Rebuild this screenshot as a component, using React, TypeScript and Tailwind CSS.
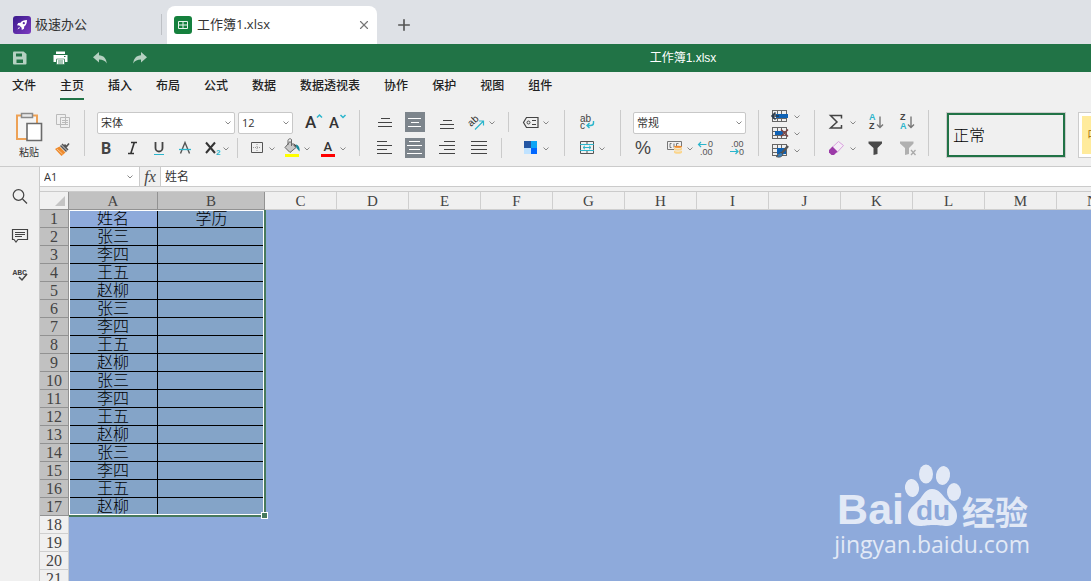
import React from "react";
import { X, Plus } from "lucide-react";

type Kids = { children?: React.ReactNode };

function Glyph({ children }: Kids) {
  return (
    <svg viewBox="0 0 20 20" className="h-5 w-5 shrink-0" fill="none" aria-hidden="true">
      {children}
    </svg>
  );
}

function Tool({ label, on, className = "", children }: Kids & { label: string; on?: boolean; className?: string }) {
  return (
    <button
      type="button"
      aria-label={label}
      aria-pressed={on}
      className={`flex h-5 w-5 shrink-0 items-center justify-center ${on ? "bg-[#7d858c]" : ""} ${className}`}
    >
      <Glyph>{children}</Glyph>
    </button>
  );
}

function Chevron() {
  return (
    <svg viewBox="0 0 6 4" className="h-1 w-1.5" fill="none" aria-hidden="true">
      <path d="M.5.5 3 3 5.500.5" stroke="#888" strokeWidth="1" />
    </svg>
  );
}

function More({ label, className = "" }: { label: string; className?: string }) {
  return (
    <button type="button" aria-label={label} className={`flex h-5 w-2.5 shrink-0 items-center justify-center pt-0.5 ${className}`}>
      <Chevron />
    </button>
  );
}

function Sep({ className }: { className: string }) {
  return <div className={`w-px shrink-0 bg-[#cbcbcb] ${className}`} />;
}

function Picker({ label, value, options, className }: { label: string; value: string; options: string[]; className: string }) {
  return (
    <div className={`relative h-[22px] shrink-0 ${className}`}>
      <select
        aria-label={label}
        defaultValue={value}
        className="block h-full w-full appearance-none rounded-xs border border-[#c8c8c8] bg-white pl-[3px] text-[11px] leading-5 text-[#333]"
      >
        {options.map((o) => (
          <option key={o}>{o}</option>
        ))}
      </select>
      <span className="pointer-events-none absolute inset-y-0 right-1 flex items-center">
        <Chevron />
      </span>
    </div>
  );
}

function Lines({ rows, color = "#444" }: { rows: [number, number, number][]; color?: string }) {
  return (
    <g fill={color} shapeRendering="crispEdges">
      {rows.map(([x, y, w]) => (
        <rect key={y} x={x} y={y} width={w} height="1" />
      ))}
    </g>
  );
}

function GridArt() {
  return <path d="M2.5 4.5h14v11h-14zM2.5 8.5h14M2.5 12.5h14M7.5 4.5v11M11.5 4.5v11" stroke="#666" shapeRendering="crispEdges" />;
}

function TabBar() {
  return (
    <header className="flex h-11 shrink-0 items-end bg-[#dee1e6] text-[13px] text-[#333]">
      <a href="#home" className="flex h-[38px] w-[161px] items-center gap-1 pl-[13px]">
        <svg viewBox="0 0 18 18" className="h-[18px] w-[18px]" aria-hidden="true">
          <defs>
            <linearGradient id="brand" x1="0" y1="0" x2="1" y2="1">
              <stop offset="0" stopColor="#3a1a8c" />
              <stop offset="1" stopColor="#7d3bc0" />
            </linearGradient>
          </defs>
          <rect width="18" height="18" rx="3" fill="url(#brand)" />
          <path d="M14 4c-3.2 0-5.3 1-6.5 2.8L5.200 7 4 9.200l2.300.2 2.300 2.300.2 2.300L11 12.800l.2-2.300C13 9.300 14 7.200 14 4z" fill="#fff" />
          <path d="M6 11 4.400 13.600 7 12z" fill="#fff" />
          <circle cx="10.8" cy="7.2" r="1.1" fill="#5a2ba5" />
        </svg>
        <span>极速办公</span>
      </a>
      <div className="mb-[9px] h-[21px] w-px bg-[#bdc0c5]" />
      <div className="ml-[5px] flex h-[38px] w-[210px] items-center rounded-t-lg bg-white pr-1.5 pl-[7px]">
        <svg viewBox="0 0 18 18" className="h-[18px] w-[18px]" fill="none" aria-hidden="true">
          <rect width="18" height="18" rx="3" fill="#15803d" />
          <path d="M4.5 5.5h9v7h-9zM4.5 9h9M9 5.5v7" stroke="#e8f5ec" />
        </svg>
        <span className="ml-[5px] flex-1">工作簿1.xlsx</span>
        <button type="button" aria-label="关闭标签页" className="flex items-center">
          <X size={14} strokeWidth={2} color="#777" />
        </button>
      </div>
      <button type="button" aria-label="新建标签页" className="ml-[18px] flex h-[38px] items-center">
        <Plus size={18} strokeWidth={2.2} color="#555" />
      </button>
    </header>
  );
}

function TitleBar() {
  return (
    <div className="flex h-7 shrink-0 items-center bg-[#217346]">
      <div className="flex w-[275px] shrink-0 gap-5 pl-2.5">
        <Tool label="保存">
          <path d="M3 4.5A1 1 0 0 1 4 3.5h9.500L16.500 6v9.500a1 1 0 0 1-1 1H4a1 1 0 0 1-1-1z" fill="#b6d1c2" />
          <path d="M6 5.5h6v3H6zM6.500 11.500h6.500v3.500H6.500z" fill="#217346" />
        </Tool>
        <Tool label="打印">
          <path d="M6 3.5h9V6H6zM3.500 7h14v7H15v-2.500H6V14H3.500z" fill="#fff" />
          <path d="M6.5 11h8v5.500h-8z" fill="#fff" stroke="#217346" strokeWidth=".6" />
          <path d="M8 13h5M8 15h5" stroke="#217346" strokeWidth=".8" />
          <path d="M14 8.5h1.500" stroke="#217346" />
        </Tool>
        <Tool label="撤消">
          <path d="M9 4v3.200c4.500.3 7.300 3 7.800 8.300-1.800-3-4.200-4-7.800-4V14.500L3 9.200z" fill="#b6d1c2" />
        </Tool>
        <Tool label="恢复">
          <path d="M11 4v3.200c-4.500.3-7.300 3-7.800 8.300 1.800-3 4.200-4 7.800-4V14.500l6-5.300z" fill="#b6d1c2" />
        </Tool>
      </div>
      <h1 className="flex-1 text-center font-['Liberation_Sans','Noto_Sans_CJK_SC',sans-serif] text-xs text-white">工作簿1.xlsx</h1>
    </div>
  );
}

const MENUS = ["文件", "主页", "插入", "布局", "公式", "数据", "数据透视表", "协作", "保护", "视图", "组件"];

function MenuBar() {
  return (
    <nav className="flex h-8 shrink-0 items-start gap-6 px-3 text-xs font-medium text-[#222]">
      {MENUS.map((m) => (
        <a key={m} href="#menu" className={`flex h-7 shrink-0 items-center border-b-2 pt-0.5 ${m === "主页" ? "border-[#217346]" : "border-transparent"}`}>
          {m}
        </a>
      ))}
    </nav>
  );
}

function Ribbon() {
  return (
    <div className="flex h-[63px] shrink-0 items-start overflow-hidden border-b border-[#cbcbcb]">
      <button type="button" className="mt-2 ml-[15px] flex w-7 shrink-0 flex-col items-center">
        <svg viewBox="0 0 28 31" className="h-[31px] w-7" fill="none" aria-hidden="true">
          <path d="M2 3.5h20V27H2z" fill="#f5f5f5" stroke="#eda257" strokeWidth="2" />
          <path d="M6.5 1.5h11v4h-11z" fill="#e8e8e8" stroke="#8a8a8a" strokeWidth="1.5" />
          <path d="M12 11.5h14.500v17H12z" fill="#fff" stroke="#6b6b6b" strokeWidth="1.6" />
        </svg>
        <span className="text-[10px] leading-[18px] text-[#333]">粘贴</span>
      </button>
      <div className="ml-2.5 flex flex-col gap-2 pt-[7px]">
        <Tool label="复制">
          <path d="M3.5 3.5h9v10h-9zM7.500 6.500h9v10h-9z" fill="#f0f0f0" stroke="#bbb" />
          <path d="M9 9.5h6M9 11.5h6M9 13.5h6" stroke="#bbb" />
        </Tool>
        <Tool label="格式刷">
          <path d="M11.5 5.5 13.500 7.500 16 4.500M9 5l6 6M7.500 6.500l6 6" stroke="#555" strokeWidth="1.6" />
          <path d="m6.5 7.5 6 6L8.500 17 2 10z" fill="#ee8a2c" />
          <path d="m4 10 5.500 5" stroke="#f6c593" />
        </Tool>
      </div>
      <Sep className="mt-1.5 ml-[11px] h-[46px]" />

      <div className="ml-3 flex shrink-0 flex-col gap-1.5 pt-2">
        <div className="flex h-5 items-start">
          <Picker label="字体" value="宋体" options={["宋体", "黑体", "楷体"]} className="w-[138px]" />
          <Picker label="字号" value="12" options={["10", "11", "12", "14"]} className="ml-[3px] w-[55px]" />
          <Tool label="增大字号" className="ml-[11px]">
            <text x="1" y="16" fontSize="17" fontWeight="500" fill="#333" fontFamily="Roboto">A</text>
            <path d="M13 5.500 15.500 3 18 5.500" stroke="#2bb5cc" strokeWidth="1.5" />
          </Tool>
          <Tool label="减小字号" className="ml-1">
            <text x="1" y="16" fontSize="15" fontWeight="500" fill="#333" fontFamily="Roboto">A</text>
            <path d="M12.5 3 15 5.500 17.500 3" stroke="#2bb5cc" strokeWidth="1.5" />
          </Tool>
        </div>
        <div className="flex h-5 items-center">
          <Tool label="加粗">
            <text x="4" y="16" fontSize="16" fontWeight="700" fill="#444" fontFamily="Roboto">B</text>
          </Tool>
          <Tool label="倾斜" className="ml-1.5">
            <path d="M8 4.5h6M5 15.5h6M11.300 4.500l-3.500 11" stroke="#333" strokeWidth="1.6" />
          </Tool>
          <Tool label="下划线" className="ml-1.5">
            <path d="M6.5 4v6a3.500 3.500 0 0 0 7 0V4" stroke="#444" strokeWidth="1.8" />
            <path d="M5 16.5h10" stroke="#2bb5cc" />
          </Tool>
          <Tool label="删除线" className="ml-1.5">
            <path d="m5.500 15.500 4.500-11 4.500 11" stroke="#555" strokeWidth="1.4" />
            <path d="M4 11.5h12" stroke="#2bb5cc" strokeWidth="1.3" />
          </Tool>
          <Tool label="下标" className="ml-1.5">
            <path d="m5 4.500 9 10.500M14 4.500 5 15" stroke="#333" strokeWidth="2" />
            <text x="15" y="17" fontSize="8" fontWeight="700" fill="#2bb5cc" fontFamily="Liberation Sans">2</text>
          </Tool>
          <More label="下标选项" />
          <Sep className="ml-1.5 h-5" />
          <Tool label="边框" className="ml-[9px]">
            <path d="M4.5 4.5h11v10h-11z" stroke="#555" />
            <path d="M6 9.5h8M10 6v7.500" stroke="#999" strokeDasharray="1 1" />
          </Tool>
          <More label="边框选项" />
          <Tool label="填充颜色" className="ml-[5px]">
            <path d="m8 3.500 6 6-6 5-5-5z" fill="#c9c9c9" stroke="#666" />
            <path d="M6 7V2.500A2 2 0 0 1 9.500 1.500V8" stroke="#666" />
            <path d="m11 5 3.500 2.500L15 9l-2-.5z" fill="#444" />
            <path d="M14 6.500c2.500.5 4 3 3.500 7l-3-3.500z" fill="#168a9c" />
            <path d="M3 16h14v3H3z" fill="#ff0" />
          </Tool>
          <More label="填充颜色选项" />
          <Tool label="字体颜色" className="ml-1.5">
            <text x="5.5" y="13" fontSize="13" fontWeight="500" fill="#333" fontFamily="Roboto">A</text>
            <path d="M3 16h14v3H3z" fill="red" />
          </Tool>
          <More label="字体颜色选项" />
        </div>
      </div>
      <Sep className="mt-1.5 ml-[11px] h-[46px]" />

      <div className="ml-[15px] flex shrink-0 flex-col gap-1.5 pt-2">
        <div className="flex h-5 items-center">
          <Tool label="顶端对齐"><Lines rows={[[6, 6, 9], [3, 10, 14], [3, 14, 14]]} /></Tool>
          <Tool label="垂直居中" on className="ml-2.5"><Lines color="#fff" rows={[[3, 6, 13], [6, 10, 8], [3, 14, 13]]} /></Tool>
          <Tool label="底端对齐" className="ml-3"><Lines rows={[[6, 8, 9], [3, 12, 14], [3, 16, 14]]} /></Tool>
          <Tool label="方向" className="ml-2.5">
            <text x="4" y="15" fontSize="10" fill="#333" fontFamily="Liberation Sans" transform="rotate(-42 4 15)">ab</text>
            <path d="m8 17.500 8.500-8.500M12 9h4.500v4.500" stroke="#2bb5cc" strokeWidth="1.2" />
          </Tool>
          <More label="方向选项" />
          <Sep className="ml-[11px] h-5" />
          <Tool label="命名区域" className="ml-3">
            <path d="M5.5 5.5H17v10H5.500L2.500 10.500z" stroke="#444" strokeWidth="1.2" />
            <circle cx="7.5" cy="10.5" r="1.5" stroke="#444" />
            <path d="M11 8.5h4M11 12.5h4" stroke="#444" />
          </Tool>
          <More label="命名区域选项" />
        </div>
        <div className="flex h-5 items-center">
          <Tool label="左对齐"><Lines rows={[[2, 3, 10], [2, 7, 15], [2, 11, 10], [2, 15, 15]]} /></Tool>
          <Tool label="居中" on className="ml-2.5"><Lines color="#fff" rows={[[4, 3, 11], [2, 7, 15], [4, 11, 11], [2, 15, 15]]} /></Tool>
          <Tool label="右对齐" className="ml-3"><Lines rows={[[7, 3, 11], [2, 7, 16], [7, 11, 11], [2, 15, 16]]} /></Tool>
          <Tool label="两端对齐" className="ml-3"><Lines rows={[[2, 3, 16], [2, 7, 16], [2, 11, 16], [2, 15, 16]]} /></Tool>
          <Sep className="ml-3 h-5" />
          <Tool label="条件格式" className="ml-[19px]">
            <path d="M3 3h7v7H3z" fill="#2456a3" />
            <path d="M10 3h6v7h-6z" fill="#0ba5f5" />
            <path d="M3 10h7v6H3z" fill="#bfe2ff" />
            <path d="M10 10h6v6h-6z" fill="#0067ff" />
          </Tool>
          <More label="条件格式选项" />
        </div>
      </div>
      <Sep className="mt-1.5 ml-[13px] h-[46px]" />

      <div className="ml-3 flex shrink-0 flex-col gap-1.5 pt-2">
        <Tool label="自动换行">
          <text x="3" y="10" fontSize="10" fill="#444" fontFamily="Liberation Sans">
            <tspan x="3" y="10">ab</tspan>
            <tspan x="3" y="17">c</tspan>
          </text>
          <path d="M16.5 9v2c0 2-1.500 2.500-3 2.500H10M12.500 11 10 13.500l2.500 2.500" stroke="#2bb5cc" strokeWidth="1.4" />
        </Tool>
        <div className="flex">
          <Tool label="合并单元格">
            <path d="M3.5 3.5h13v12h-13zM10 3.500v3M10 12.500v3" stroke="#555" />
            <path d="M3 6.5h14M3 12.5h14M6 9.500h8M8 7.800 6 9.500l2 1.700M12 7.800l2 1.700-2 1.700" stroke="#2bb5cc" />
          </Tool>
          <More label="合并单元格选项" />
        </div>
      </div>
      <Sep className="mt-1.5 ml-[13px] h-[46px]" />

      <div className="ml-3 flex shrink-0 flex-col gap-1.5 pt-2">
        <div className="flex h-5 items-start">
          <Picker label="数字格式" value="常规" options={["常规", "数值", "货币"]} className="w-[113px]" />
        </div>
        <div className="flex h-5 items-center">
          <Tool label="百分比">
            <text x="2" y="16" fontSize="18" fill="#444" fontFamily="Liberation Sans">%</text>
          </Tool>
          <Tool label="货币样式" className="ml-3">
            <path d="M2.5 3.5h14v8h-14z" stroke="#777" />
            <path d="M6.5 5.5H5v4h1.500M9 5.500v4M11.500 9.500v-4h2" stroke="#777" />
            <path d="M9 9c0-1.500 8-1.500 8 0v5.500c0 1.800-8 1.800-8 0z" fill="#fbd58b" />
            <path d="M9 9.200c1 1.500 7 1.500 8 0M9 12c1 1.500 7 1.500 8 0" stroke="#f0f0f0" />
            <ellipse cx="13" cy="8.8" rx="4" ry="1" fill="#ee8a2c" />
          </Tool>
          <More label="货币样式选项" />
          <Tool label="减少小数位数" className="ml-px">
            <text fontSize="9" fill="#555" fontFamily="Liberation Sans">
              <tspan x="12" y="9">0</tspan>
              <tspan x="4" y="17">.00</tspan>
            </text>
            <path d="M10.5 6.5h-8M5 4 2.500 6.500 5 9" stroke="#2bb5cc" strokeWidth="1.2" />
          </Tool>
          <Tool label="增加小数位数" className="ml-[11px]">
            <text fontSize="9" fill="#555" fontFamily="Liberation Sans">
              <tspan x="4" y="9">.00</tspan>
              <tspan x="12" y="17">0</tspan>
            </text>
            <path d="M3 13.5h8M8.500 11l2.500 2.500L8.500 16" stroke="#2bb5cc" strokeWidth="1.2" />
          </Tool>
        </div>
      </div>
      <Sep className="mt-1.5 ml-[11px] h-[46px]" />

      <div className="ml-[11px] flex shrink-0 flex-col pt-[3px]">
        <div className="flex h-[17px] items-center">
          <Tool label="插入单元格">
            <GridArt />
            <path d="M6 8h12v4H6z" fill="#0f62b5" />
            <path d="M9 10H2.500M5.500 6.500 2 10l3.500 3.500" stroke="#2a3b4c" strokeWidth="1.6" />
          </Tool>
          <More label="插入单元格选项" className="ml-0.5" />
        </div>
        <div className="flex h-[17px] items-center">
          <Tool label="删除单元格">
            <GridArt />
            <path d="M5 8h8v4H5z" fill="#0f62b5" />
            <path d="m11 6.500 7 7M18 6.500l-7 7" stroke="#7a4444" strokeWidth="1.6" />
          </Tool>
          <More label="删除单元格选项" className="ml-0.5" />
        </div>
        <div className="flex h-[17px] items-center">
          <Tool label="清除单元格">
            <GridArt />
            <path d="M7 8h9v6H7z" fill="#0f62b5" />
            <path d="m18 6-6.500 7.500" stroke="#555" strokeWidth="2.5" />
            <path d="M11 12.500c-3 0-2 3.500-5 4 3 1.500 6.500.5 7-2.500z" fill="#3c7fb8" stroke="#444" strokeWidth=".7" />
          </Tool>
          <More label="清除单元格选项" className="ml-0.5" />
        </div>
      </div>
      <Sep className="mt-1.5 ml-3 h-[46px]" />

      <div className="ml-[11px] flex shrink-0 flex-col gap-1.5 pt-2">
        <div className="flex h-5 items-center">
          <Tool label="求和">
            <path d="M15.500 6.500v-3h-11l6.500 6.500-6.500 6h11v-3" stroke="#444" strokeWidth="1.5" />
          </Tool>
          <More label="求和选项" className="ml-0.5" />
          <Tool label="升序" className="ml-2">
            <text fontWeight="700" fontFamily="Liberation Sans" fontSize="9">
              <tspan x="3" y="8" fill="#2bb5cc">A</tspan>
              <tspan x="3" y="17" fill="#444">Z</tspan>
            </text>
            <path d="M14 4.500v11M11 12.500l3 3 3-3" stroke="#777" strokeWidth="1.4" />
          </Tool>
          <Tool label="降序" className="ml-[11px]">
            <text fontWeight="700" fontFamily="Liberation Sans" fontSize="9">
              <tspan x="3" y="8" fill="#444">Z</tspan>
              <tspan x="3" y="17" fill="#2bb5cc">A</tspan>
            </text>
            <path d="M14 4.500v11M11 12.500l3 3 3-3" stroke="#777" strokeWidth="1.4" />
          </Tool>
        </div>
        <div className="flex h-5 items-center">
          <Tool label="清除">
            <path d="m12.500 3.500 5 4-7 7.500-5-5z" fill="#f5edf6" stroke="#d9a0de" />
            <path d="M6.500 8.500 11.500 13.500 8 17H5.500L3 14.500V12z" fill="#9c3aa8" />
          </Tool>
          <More label="清除选项" className="ml-0.5" />
          <Tool label="筛选" className="ml-2">
            <path d="M2.500 3.500H16v2L11.500 10v6l-4 1V10l-5-4.500z" fill="#4a4a4a" />
          </Tool>
          <Tool label="清除筛选" className="ml-[11px]">
            <path d="M3 3.500h13.500v2L12 10v6l-4 1V10L3 5.500z" fill="#b0b0b0" />
            <path d="m14 12 4.500 5M18.500 12 14 17" stroke="#aaa" strokeWidth="1.3" />
          </Tool>
        </div>
      </div>
      <Sep className="mt-1.5 ml-[11px] h-[46px]" />

      <div className="mt-2 ml-[17px] flex shrink-0 gap-3 font-['Noto_Sans_CJK_SC',sans-serif] text-base leading-5 font-light">
        <button type="button" className="h-[46px] w-[120px] border border-[#ccc]">
          <span className="flex h-full items-center border-2 border-[#217346] pb-0.5 pl-1 text-black">正常</span>
        </button>
        <button type="button" className="h-[46px] w-[120px] border border-[#ccc] bg-white p-[3px]">
          <span className="flex h-full items-center bg-[#ffeb9c] pb-0.5 pl-[5px] text-[#9c6500]">中性</span>
        </button>
      </div>
    </div>
  );
}

function SideBar() {
  return (
    <aside className="flex w-10 shrink-0 flex-col border-r border-[#cbcbcb] pt-2.5">
      <button type="button" aria-label="搜索" className="flex h-[39px] items-center justify-center">
        <Glyph>
          <circle cx="8.5" cy="8" r="5.300" stroke="#444" strokeWidth="1.2" />
          <path d="m12.500 12 4.500 4.500" stroke="#444" strokeWidth="1.3" />
        </Glyph>
      </button>
      <button type="button" aria-label="批注" className="flex h-[39px] items-center justify-center">
        <Glyph>
          <path d="M2.500 3.500h15v10H8L6 16l-2-2.500H2.500z" stroke="#444" strokeWidth="1.2" />
          <path d="M5 6.500h10M5 8.500h10M5 10.500h7" stroke="#444" />
        </Glyph>
      </button>
      <button type="button" aria-label="拼写检查" className="flex h-[39px] items-center justify-center">
        <Glyph>
          <text x="2.5" y="10" fontSize="8" fontWeight="700" fill="#444" fontFamily="Liberation Mono">ABC</text>
          <path d="m9 12 3 3 5-6" stroke="#444" strokeWidth="1.5" />
        </Glyph>
      </button>
    </aside>
  );
}

function FormulaBar() {
  return (
    <div className="flex h-5 shrink-0 items-stretch border-b border-[#cbcbcb] bg-white text-[#333]">
      <div className="relative flex w-[100px] shrink-0 border-r border-[#cbcbcb]">
        <input aria-label="名称框" defaultValue="A1" className="w-full bg-transparent pt-px pl-1 text-[11px]" />
        <span className="pointer-events-none absolute inset-y-0 right-1.5 flex items-center">
          <Chevron />
        </span>
      </div>
      <button
        type="button"
        aria-label="插入函数"
        className="flex w-[21px] shrink-0 items-center justify-center border-r border-[#cbcbcb] bg-[#f0f0f0] font-['Liberation_Serif',serif] text-base leading-none text-[#444] italic"
      >
        fx
      </button>
      <input aria-label="编辑栏" defaultValue="姓名" className="min-w-0 flex-1 bg-transparent pt-px pl-1 text-xs" />
    </div>
  );
}

const COLS = "ABCDEFGHIJKLMNOPQRST".split("");
const NAMES = ["张三", "李四", "王五", "赵柳"];
const ROWS = Array.from({ length: 30 }, (_, i) => i + 1);

function Sheet() {
  return (
    <div className="relative mt-1 min-h-0 flex-1 overflow-hidden border-t border-[#cbcbcb] bg-[#8eaadb]">
      <table className="w-px table-fixed border-separate border-spacing-0 text-center">
        <colgroup>
          <col className="w-[29px]" />
          {COLS.map((c) => (
            <col key={c} className={c === "A" ? "w-[89px]" : c === "B" ? "w-[107px]" : "w-[72px]"} />
          ))}
        </colgroup>
        <thead className="font-['Liberation_Serif',serif] text-[15px] leading-4 text-[#444]">
          <tr>
            <td className="h-[18px] border-r border-b border-[#929292] bg-[#f0f0f0] p-0">
              <svg viewBox="0 0 10 10" className="mr-[3px] ml-auto h-2.5 w-2.5" aria-hidden="true">
                <path d="M10 0v10H0z" fill="#c4c4c4" />
              </svg>
            </td>
            {COLS.map((c) => (
              <th
                key={c}
                scope="col"
                className={`h-[18px] border-r border-b p-0 font-normal ${c < "C" ? "border-[#929292] bg-[#c1c1c1]" : "border-[#cfcfcf] bg-[#f0f0f0]"}`}
              >
                {c}
              </th>
            ))}
          </tr>
        </thead>
        <tbody className="font-['Noto_Sans_CJK_SC',sans-serif] text-base leading-[14px] font-light text-black">
          {ROWS.map((n) => {
            const picked = n <= 17;
            const line = picked ? "border-b border-black" : "";
            const fill = picked ? "bg-[#84a4c8]" : "";
            return (
              <tr key={n}>
                <th
                  scope="row"
                  className={`h-[18px] border-r border-b p-0 font-['Liberation_Serif',serif] leading-4 font-normal text-[#444] ${picked ? "border-[#929292] bg-[#c1c1c1]" : "border-[#cfcfcf] bg-[#f0f0f0]"}`}
                >
                  {n}
                </th>
                <td className={`p-0 align-top ${line} ${n === 1 ? "" : fill} ${picked ? "border-r" : ""}`}>
                  {n === 1 ? "姓名" : picked ? NAMES[(n - 2) % 4] : null}
                </td>
                <td className={`p-0 align-top ${line} ${fill}`}>{n === 1 ? "学历" : null}</td>
                <td colSpan={COLS.length - 2} className="p-0" />
              </tr>
            );
          })}
        </tbody>
      </table>
      <div className="pointer-events-none absolute top-[18px] left-[29px] h-[307px] w-[197px] border-r-2 border-b-2 border-[#477a5d]">
        <div className="h-full w-full border border-white" />
        <div className="absolute -right-1 -bottom-1 h-[7px] w-[7px] border border-white bg-[#477a5d]" />
      </div>
    </div>
  );
}

function Watermark() {
  return (
    <div className="pointer-events-none absolute right-[61px] bottom-6 flex flex-col items-end text-white opacity-75">
      <div className="flex items-end">
        <span className="font-['Liberation_Sans',sans-serif] text-[43px] leading-[44px] font-bold">Bai</span>
        <svg viewBox="0 0 58 64" className="mb-1 h-16 w-[58px]" aria-hidden="true">
          <g fill="#fff">
            <ellipse cx="8" cy="25" rx="7" ry="9" transform="rotate(-8 8 25)" />
            <ellipse cx="22" cy="11" rx="7" ry="9.5" />
            <ellipse cx="39" cy="12.5" rx="7" ry="9.5" transform="rotate(10 39 12.5)" />
            <ellipse cx="50" cy="29" rx="7" ry="9" />
            <path d="M28 26c7 0 10 6 14 10 5 5 11 9 11 17 0 6-4 10-10 10-5 0-8-1-14-1s-8 1-13 1C8 63 4 58 4 53c0-7 6-11 11-16 4-4 6-11 13-11z" />
          </g>
          <text x="12" y="57" fontSize="28" fontWeight="700" fill="#8eaadb" fontFamily="Liberation Sans">du</text>
        </svg>
        <span className="pr-0.5 font-['Noto_Sans_CJK_SC',sans-serif] text-[33px] leading-10 font-bold">经验</span>
      </div>
      <span className="font-['Open_Sans',sans-serif] text-[23px] leading-[26px]">jingyan.baidu.com</span>
    </div>
  );
}

export default function App() {
  return (
    <div className="relative flex h-screen flex-col overflow-hidden bg-[#f0f0f0] font-['Open_Sans','Noto_Sans_CJK_SC',sans-serif]">
      <TabBar />
      <TitleBar />
      <MenuBar />
      <Ribbon />
      <div className="flex min-h-0 flex-1">
        <SideBar />
        <main className="flex min-w-0 flex-1 flex-col">
          <FormulaBar />
          <Sheet />
        </main>
      </div>
      <Watermark />
    </div>
  );
}
